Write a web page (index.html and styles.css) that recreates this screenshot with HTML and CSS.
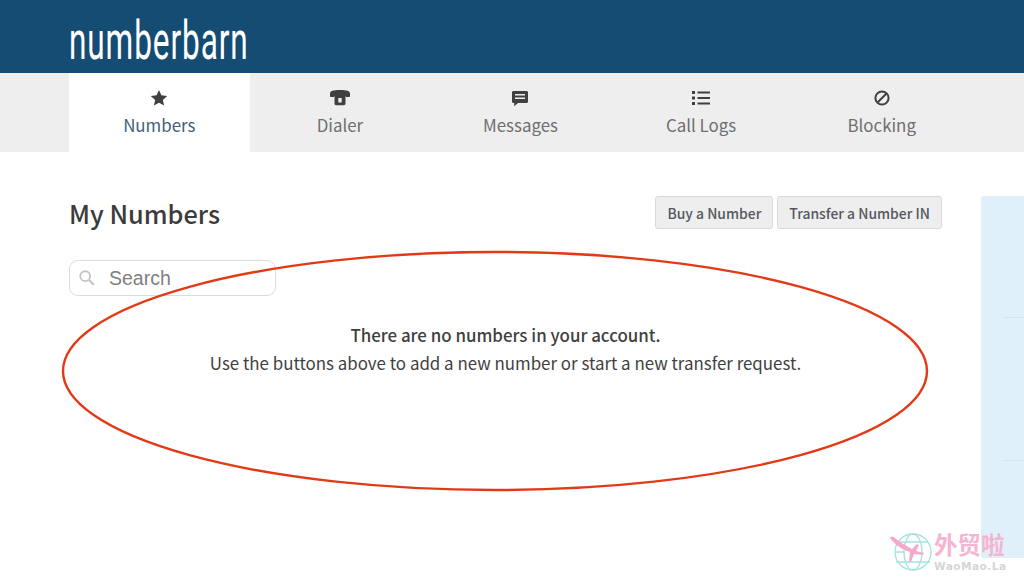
FILE: index.html
```html
<!DOCTYPE html>
<html lang="en">
<head>
    <meta charset="UTF-8">
    <title>My Numbers - NumberBarn</title>
    <link rel="stylesheet" href="styles.css">
</head>
<body>
    <header class="topbar">
        <a class="logo">numberbarn</a>
    </header>

    <nav class="tabs">
        <a class="tab active">
            <svg class="tab-icon" viewBox="0 0 20 20"><path d="M10 2l2.400 5.300 5.800.7-4.300 3.900 1.200 5.700-5.100-2.900-5.100 2.900 1.200-5.700L1.800 8l5.800-.7z"/></svg>
            <span>Numbers</span>
        </a>
        <a class="tab">
            <svg class="tab-icon" viewBox="0 0 20 20"><path d="M0 5.500C0 3 3 2 10 2s10 1 10 3.500V8c0 .6-.4 1-1 1h-2.500c-.6 0-1-.4-1-1H4.500c0 .6-.4 1-1 1H1c-.6 0-1-.4-1-1z"/><path fill-rule="evenodd" d="M4.500 8h11v7.500c0 1-.6 1.700-1.500 1.700H6c-.9 0-1.500-.7-1.500-1.700zM8.300 10v4.500h3.400V10z"/></svg>
            <span>Dialer</span>
        </a>
        <a class="tab">
            <svg class="tab-icon" viewBox="0 0 20 20"><path fill-rule="evenodd" d="M3.500 3h13c1 0 1.500.6 1.500 1.500v9c0 .9-.5 1.500-1.500 1.500H8l-3.800 3.300V15h-.7C2.500 15 2 14.400 2 13.500v-9C2 3.600 2.500 3 3.500 3zM5 6v1.500h10V6zM5 9.500V11h10V9.500z"/></svg>
            <span>Messages</span>
        </a>
        <a class="tab">
            <svg class="tab-icon" viewBox="0 0 20 20"><path d="M1 3h3v3H1zM1 8.500h3v3H1zM1 14h3v3H1zM6.500 3.500H19v2H6.500zM6.500 9H19v2H6.500zM6.500 14.500H19v2H6.500z"/></svg>
            <span>Call Logs</span>
        </a>
        <a class="tab">
            <svg class="tab-icon" viewBox="0 0 20 20"><circle cx="10" cy="10" r="6.600" fill="none" stroke="#404040" stroke-width="2"/><path d="M5.500 14.500l9-9" stroke="#404040" stroke-width="2"/></svg>
            <span>Blocking</span>
        </a>
    </nav>

    <div class="page">
        <main class="content">
            <div class="title-row">
                <h1>My Numbers</h1>
                <div class="actions">
                    <button class="btn">Buy a Number</button>
                    <button class="btn">Transfer a Number IN</button>
                </div>
            </div>
            <div class="search">
                <svg class="search-icon" viewBox="0 0 20 20"><circle cx="8" cy="8" r="5.500" fill="none" stroke="#c4c4c4" stroke-width="2"/><path d="M12 12l5.500 5.500" stroke="#c4c4c4" stroke-width="2.400"/></svg>
                <span>Search</span>
            </div>
            <div class="empty">
                <strong>There are no numbers in your account.</strong>
                <p>Use the buttons above to add a new number or start a new transfer request.</p>
            </div>
        </main>
        <aside class="sidebar">
            <div class="side-row"></div>
            <div class="side-row"></div>
        </aside>
    </div>

    <!-- red hand drawn ring over the empty message -->
    <svg class="ring" viewBox="0 0 1024 587"><ellipse cx="495" cy="371" rx="432" ry="119" fill="none" stroke="#e23a17" stroke-width="2.400"/></svg>

    <div class="watermark">
        <svg class="globe" viewBox="0 0 44 44">
            <g fill="none" stroke="#a5e3dd" stroke-width="1.300">
                <circle cx="24" cy="21" r="18"/>
                <ellipse cx="24" cy="21" rx="9" ry="18"/>
                <path d="M9 11h30M7 31h34M6 21h9"/>
            </g>
            <path d="M1 7c1-2 3-2 5 0 5 4 11 8 17 11l5-5 2 1-3 6 8 2-1 2-9-1-3 8-2-1 1-9C14 19 6 14 1 7z" fill="#f5a9cb"/>
        </svg>
        <div class="mark-text">
            <span class="mark-cn">外贸啦</span>
            <span class="mark-en">WaoMao.La</span>
        </div>
    </div>
</body>
</html>
```

FILE: styles.css
```css
html, body {
    height: 100%;
}
body {
    margin: 0;
    overflow: hidden;
    position: relative;
    background-color: #fff;
    font-family: "Noto Sans CJK SC", "Open Sans", sans-serif;
    color: #404040;
}
.topbar {
    height: 73px;
    padding-left: 69px;
    background-color: #154c74;
    overflow: hidden;
}
.logo {
    display: block;
    width: 320px;
    margin-top: 9px;
    color: #fff;
    font-family: "Roboto", sans-serif;
    font-weight: 400;
    font-size: 54px;
    line-height: 64px;
    letter-spacing: 1.500px;
    transform: scaleX(0.585);
    transform-origin: left center;
}
.tabs {
    display: flex;
    height: 79px;
    padding-left: 69px;
    background-color: #eeeeee;
}
.tab {
    width: 180.600px;
    display: flex;
    flex-direction: column;
    align-items: center;
    padding-top: 15px;
    box-sizing: border-box;
    font-size: 16.900px;
    line-height: 24px;
    color: #6f6f6f;
}
.tab.active {
    background-color: #fff;
    color: #3f6078;
}
.tab-icon {
    width: 20px;
    height: 20px;
    margin-bottom: 5px;
    fill: #404040;
}
.page {
    display: flex;
    padding: 44px 0 0 69px;
}
.content {
    width: 873px;
}
.title-row {
    display: flex;
    justify-content: space-between;
    align-items: flex-start;
    height: 37px;
}
h1 {
    margin: 0;
    font-size: 25.300px;
    line-height: 34px;
    font-weight: 500;
    color: #3b3b3b;
}
.actions {
    display: flex;
    gap: 4px;
}
.btn {
    height: 33px;
    padding: 0 11px;
    border: 1px solid #d9d9d9;
    border-radius: 3px;
    background-color: #eeeeee;
    font-family: inherit;
    font-size: 13.900px;
    font-weight: 500;
    color: #55585f;
}
.search {
    display: flex;
    align-items: center;
    width: 207px;
    height: 36px;
    margin-top: 27px;
    box-sizing: border-box;
    border: 1px solid #dcdcdc;
    border-radius: 9px;
    font-family: "Liberation Sans", sans-serif;
    font-size: 19.500px;
    color: #808080;
}
.search-icon {
    width: 18px;
    height: 18px;
    margin: 0 13px 0 8px;
}
.empty {
    margin-top: 25px;
    text-align: center;
    font-size: 16.900px;
    line-height: 28px;
    color: #3f3f3f;
}
.empty strong {
    display: block;
    font-weight: 500;
}
.empty p {
    margin: 0;
}
.sidebar {
    flex: none;
    width: 43px;
    height: 362px;
    margin-left: 39px;
    border-radius: 3px 0 0 3px;
    background-color: #dff0fa;
}
.side-row {
    height: 121px;
    margin-left: 22px;
    border-bottom: 1px solid #d2e4ee;
}
.side-row + .side-row {
    height: 142px;
}
.ring {
    position: absolute;
    left: 0;
    top: 0;
    width: 1024px;
    height: 587px;
    pointer-events: none;
}
.watermark {
    position: absolute;
    left: 889px;
    top: 531px;
    display: flex;
    gap: 1px;
    align-items: flex-start;
}
.globe {
    width: 44px;
    height: 44px;
}
.mark-text {
    display: flex;
    flex-direction: column;
    padding-top: 2px;
}
.mark-cn {
    font-family: "Liberation Sans", "Noto Sans CJK SC", sans-serif;
    font-size: 23.500px;
    line-height: 27px;
    font-weight: 700;
    color: #f6b3d2;
}
.mark-en {
    font-family: "DejaVu Sans", sans-serif;
    font-size: 10.500px;
    line-height: 12px;
    font-weight: 700;
    letter-spacing: 0.500px;
    color: #d5d5d5;
}
```
